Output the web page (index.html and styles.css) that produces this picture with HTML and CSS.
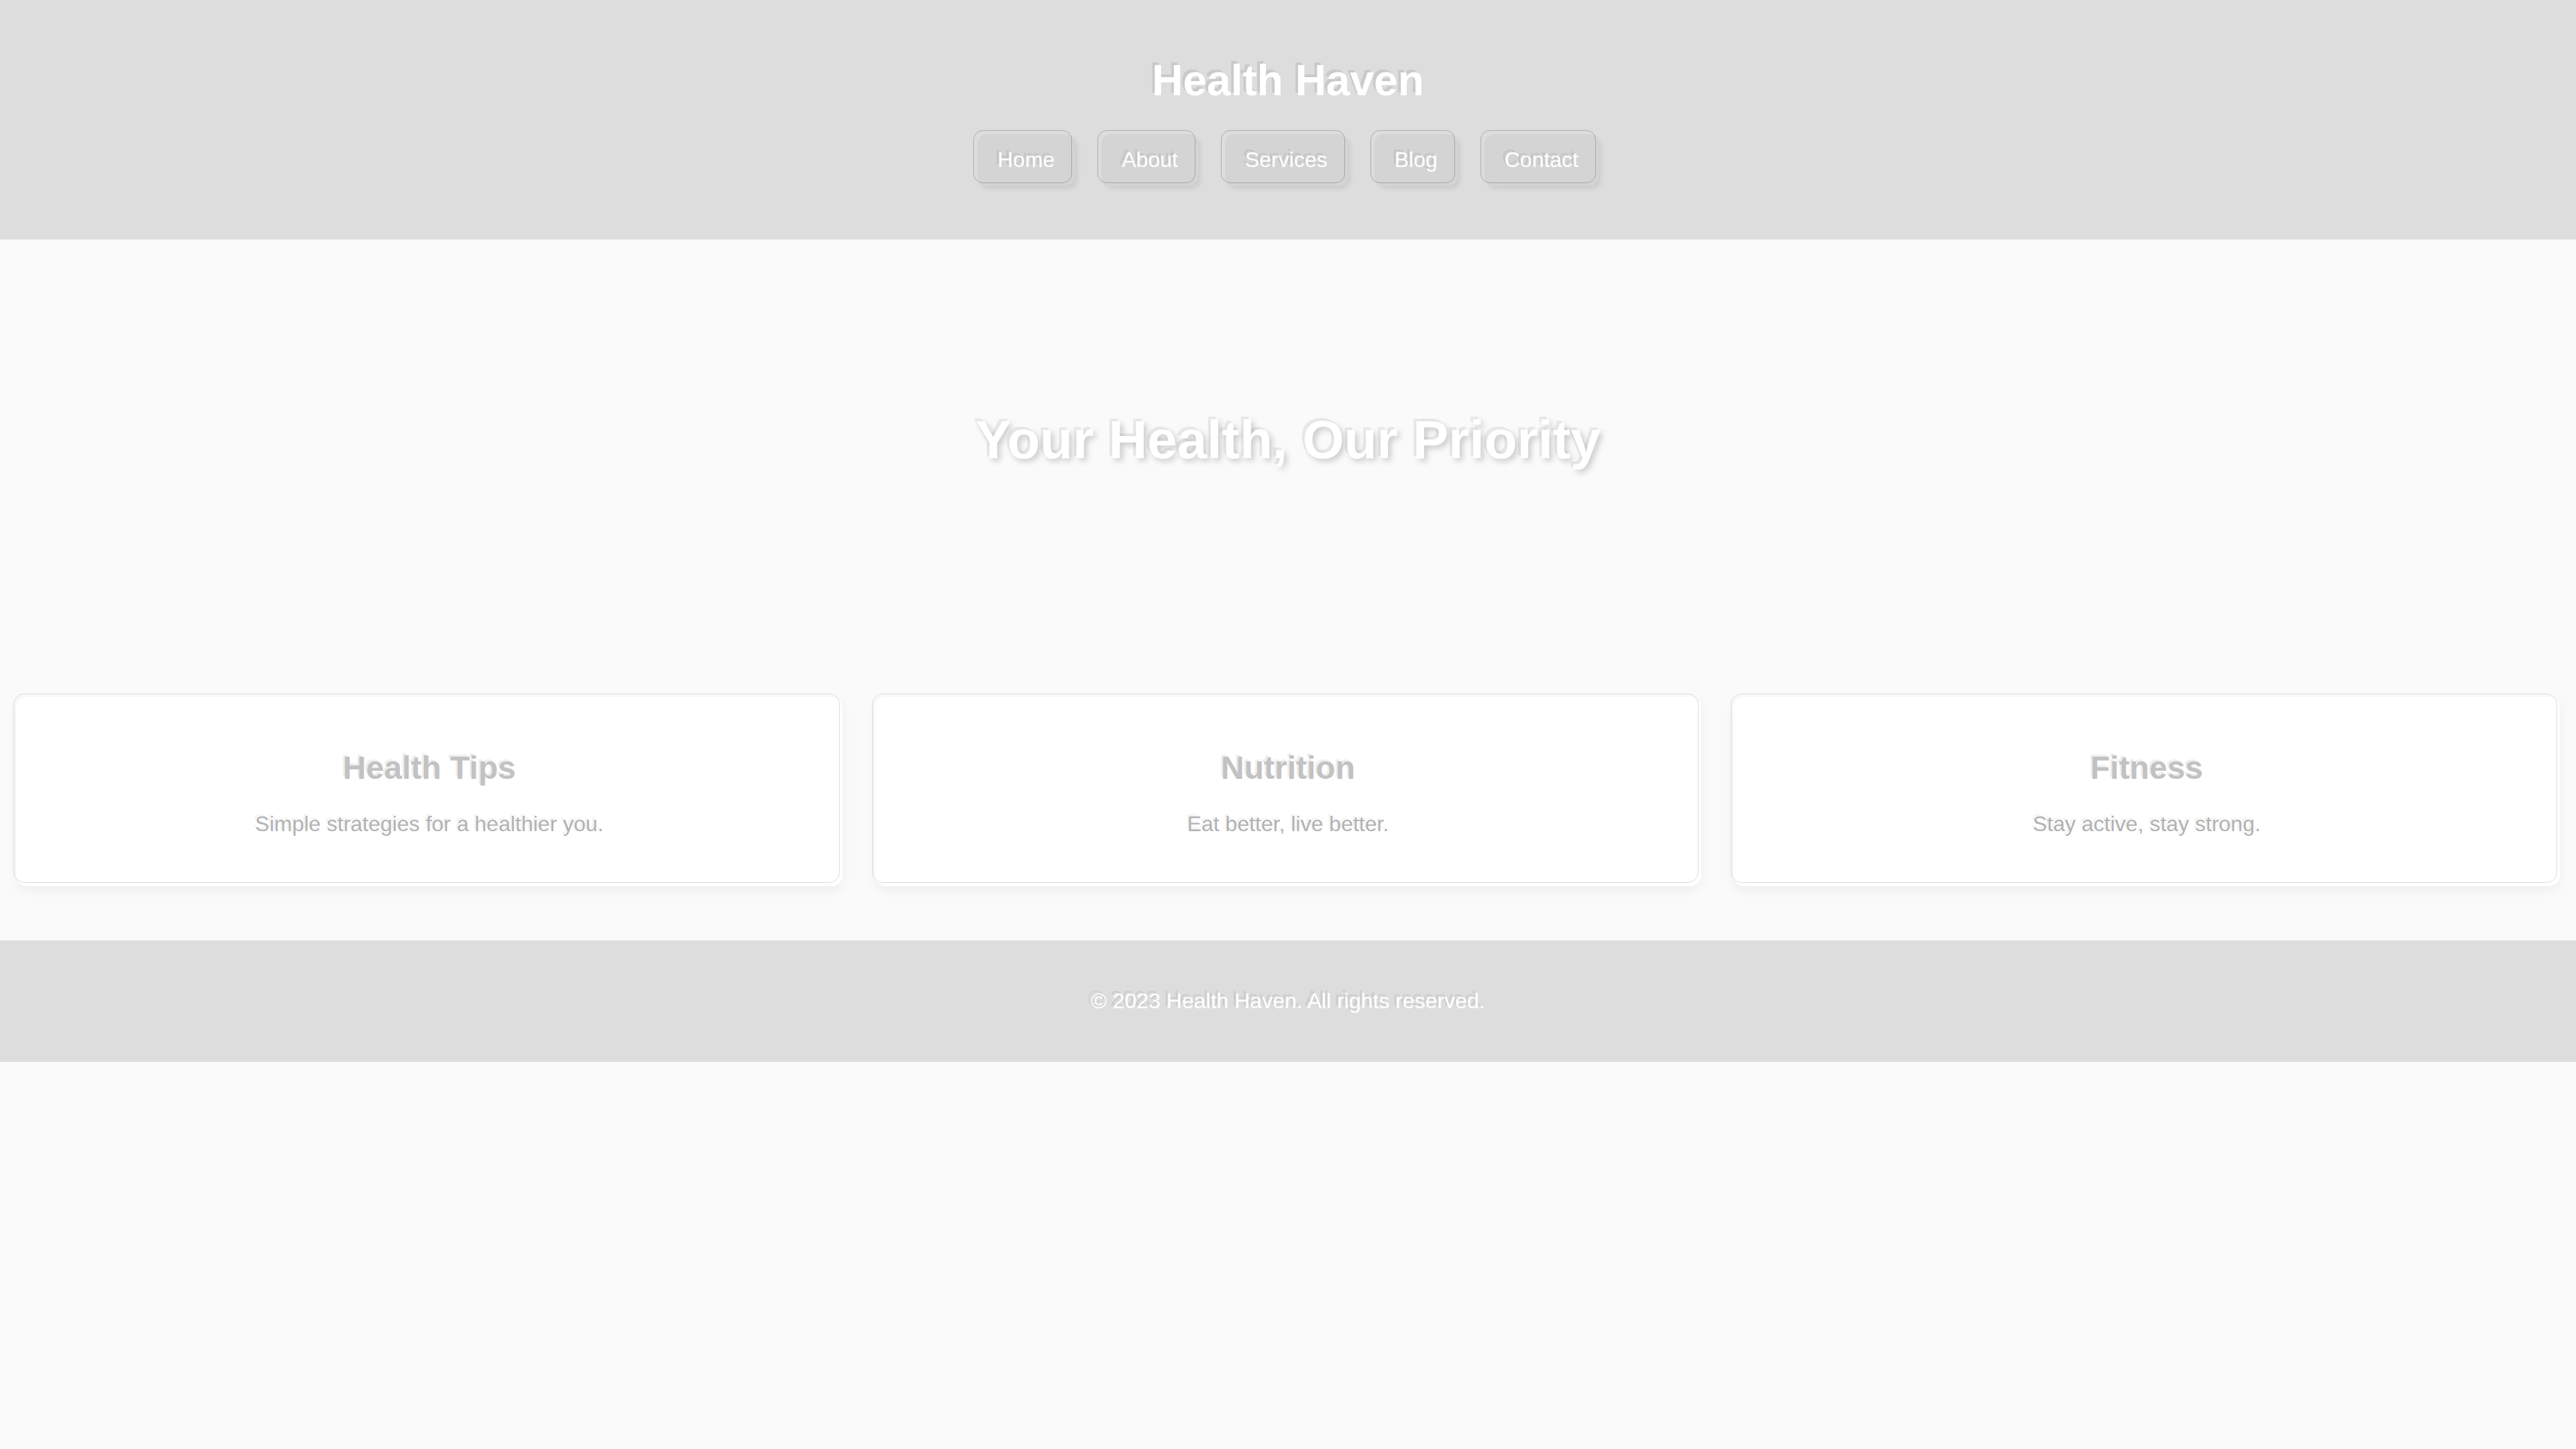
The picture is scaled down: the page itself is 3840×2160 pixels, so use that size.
FILE: index.html
```html
<!DOCTYPE html>
<html lang="en">
<head>
<meta charset="utf-8">
<title>Health Haven</title>
<link rel="stylesheet" href="styles.css">
</head>
<body>
<header class="site-header">
  <h1 class="brand">Health Haven</h1>
  <nav class="main-nav">
    <ul class="nav-list">
      <li><a class="nav-link" href="#">Home</a></li>
      <li><a class="nav-link" href="#">About</a></li>
      <li><a class="nav-link" href="#">Services</a></li>
      <li><a class="nav-link" href="#">Blog</a></li>
      <li><a class="nav-link" href="#">Contact</a></li>
    </ul>
  </nav>
</header>
<section class="hero">
  <h2 class="hero-title">Your Health, Our Priority</h2>
</section>
<section class="cards">
  <article class="card">
    <h3 class="card-title">Health Tips</h3>
    <p class="card-text">Simple strategies for a healthier you.</p>
  </article>
  <article class="card">
    <h3 class="card-title">Nutrition</h3>
    <p class="card-text">Eat better, live better.</p>
  </article>
  <article class="card">
    <h3 class="card-title">Fitness</h3>
    <p class="card-text">Stay active, stay strong.</p>
  </article>
</section>
<footer class="site-footer">
  <p class="footer-text">&copy; 2023 Health Haven. All rights reserved.</p>
</footer>
</body>
</html>
```
FILE: styles.css
```css
html, body {
  margin: 0;
  padding: 0;
}
body {
  background: #fafafa;
  font-family: "Liberation Sans", Arial, sans-serif;
  color: #333;
}
.site-header {
  background: #dddddd;
  text-align: center;
  padding: 40px 0 40px;
}
.brand {
  margin: 43px 0;
  font-size: 64px;
  font-weight: bold;
  color: #ffffff;
  line-height: 74px;
  text-shadow: -4px -4px 0 rgba(90, 90, 90, 0.14);
}
.nav-list {
  list-style: none;
  margin: 0 0 40px;
  padding: 0;
  display: flex;
  justify-content: center;
  gap: 40px;
}
.nav-link {
  position: relative;
  display: block;
  padding: 20px 30px;
  font-size: 32px;
  line-height: 37px;
  color: #ffffff;
  text-decoration: none;
  background: #d4d4d4;
  border-radius: 14px;
  box-shadow: 4px 5px 6px rgba(0, 0, 0, 0.07);
  text-shadow: -4px -4px 0 rgba(90, 90, 90, 0.12);
}
.nav-link::before {
  content: "";
  position: absolute;
  top: -6px;
  left: -6px;
  right: 4px;
  bottom: 4px;
  border: 1px solid rgba(0, 0, 0, 0.22);
  border-radius: 14px;
  pointer-events: none;
}
.hero {
  padding: 253px 0 297px;
  text-align: center;
}
.hero-title {
  margin: 0;
  font-size: 80px;
  line-height: 92px;
  font-weight: bold;
  color: #ffffff;
  text-shadow: -4px -4px 0 rgba(90, 90, 90, 0.1), 4px 4px 10px rgba(0, 0, 0, 0.2);
}
.cards {
  display: grid;
  grid-template-columns: repeat(3, 1fr);
  gap: 48px;
  padding: 40px 24px 81px;
}
.card {
  position: relative;
  background: #ffffff;
  border-radius: 16px;
  padding: 30px;
  text-align: center;
  box-shadow: 0 6px 16px rgba(0, 0, 0, 0.05);
}
.card::before {
  content: "";
  position: absolute;
  top: -5px;
  left: -4px;
  right: 4px;
  bottom: 5px;
  border: 1px solid #dcdcdc;
  border-radius: 16px;
  pointer-events: none;
}
.card-title {
  margin: 48px 0 0;
  font-size: 48px;
  line-height: 55px;
  font-weight: bold;
  color: #c2c2c2;
  text-shadow: -3px -3px 0 rgba(90, 90, 90, 0.1);
}
.card-text {
  margin: 38px 0 44px;
  font-size: 32px;
  line-height: 37px;
  color: #b2b2b2;
  text-shadow: -3px -3px 0 rgba(90, 90, 90, 0.08);
}
.site-footer {
  background: #dddddd;
  text-align: center;
  padding: 40px 0;
}
.footer-text {
  margin: 32px 0;
  font-size: 32px;
  line-height: 37px;
  color: #ffffff;
  text-shadow: -4px -4px 0 rgba(90, 90, 90, 0.12);
}
```
